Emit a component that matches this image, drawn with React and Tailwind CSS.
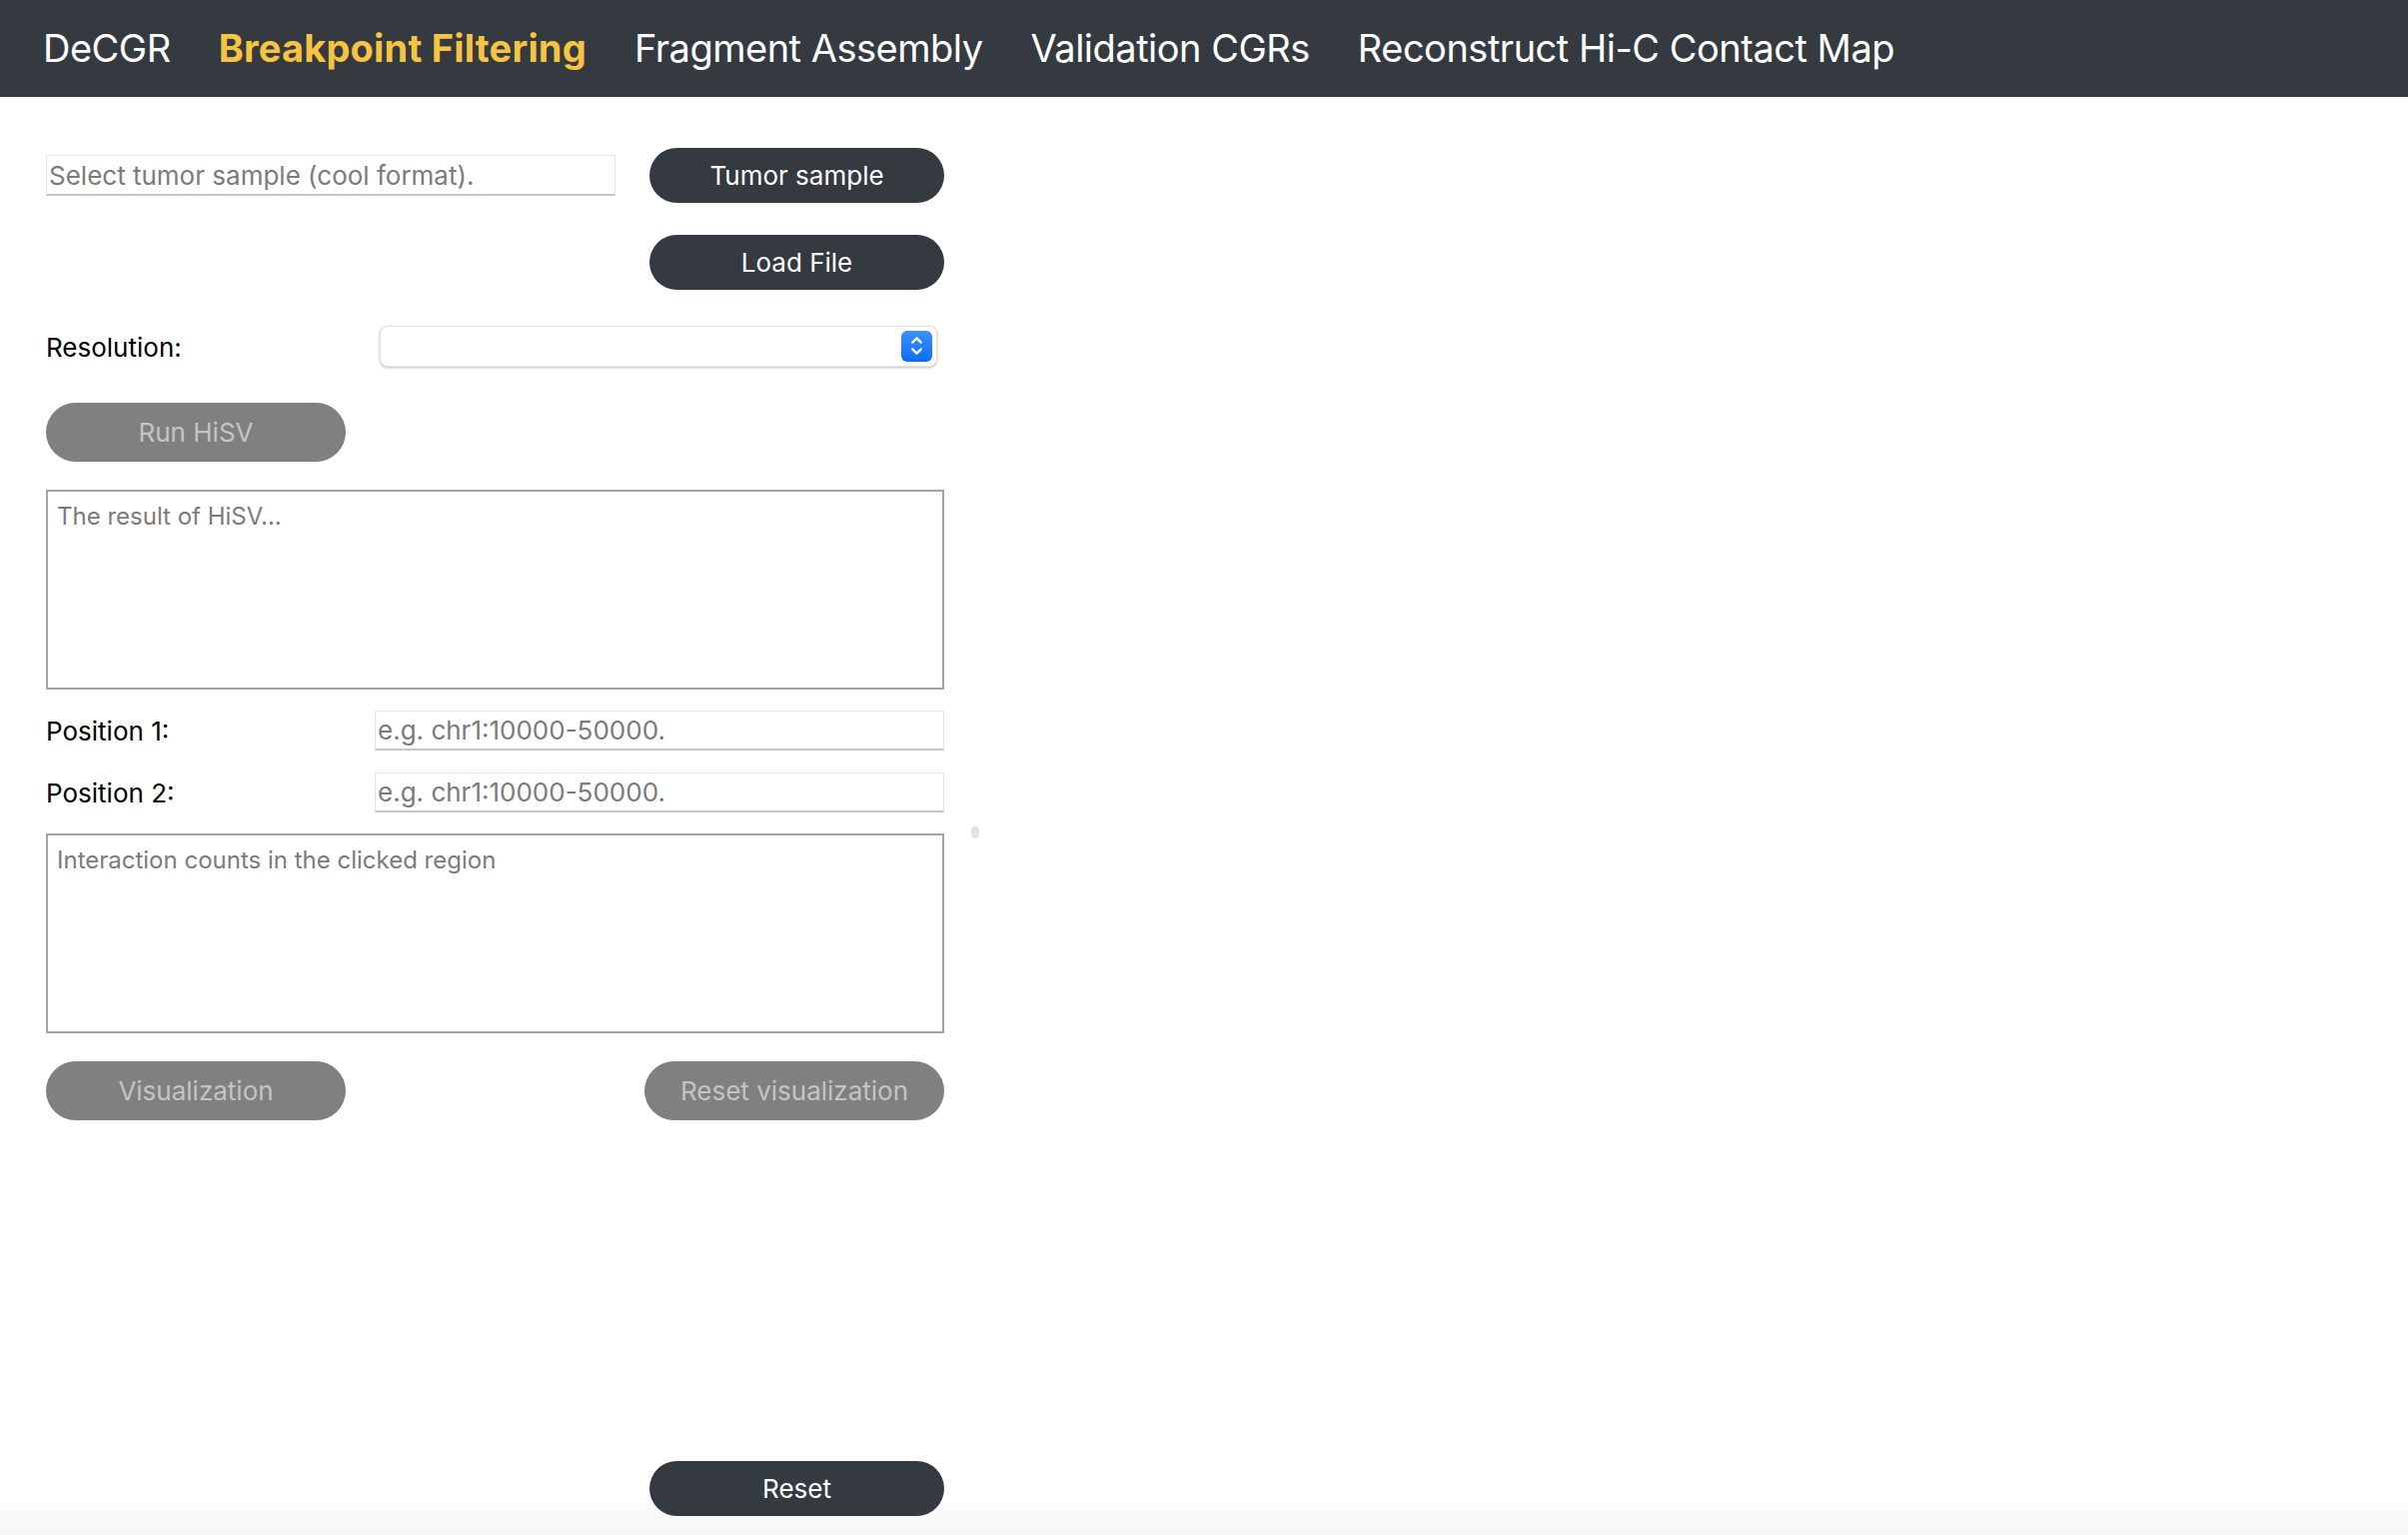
import { ChevronUp, ChevronDown } from 'lucide-react'

const navItems = [
  { label: 'DeCGR', active: false },
  { label: 'Breakpoint Filtering', active: true },
  { label: 'Fragment Assembly', active: false },
  { label: 'Validation CGRs', active: false },
  { label: 'Reconstruct Hi-C Contact Map', active: false },
]

function DarkButton({ children }) {
  return (
    <button className="w-[295px] h-[55px] rounded-full bg-[#343a40] text-white text-[26px] leading-none">
      {children}
    </button>
  )
}

function GrayButton({ children }) {
  return (
    <button
      disabled
      className="w-[300px] h-[59px] rounded-full bg-[#808080] text-[#c4c4c4] text-[26px] leading-none"
    >
      {children}
    </button>
  )
}

function TextInput({ placeholder, className }) {
  return (
    <input
      placeholder={placeholder}
      className={
        'h-[40px] px-[2px] bg-white border border-[#e4e4e4] border-b-2 border-b-[#c6c6c6] text-[26px] text-[#222] placeholder:text-[#7b7b7b] outline-none ' +
        className
      }
    />
  )
}

export default function App() {
  return (
    <div className="min-h-screen bg-white flex flex-col" style={{ fontFamily: 'Inter, "Noto Sans", sans-serif' }}>
      <nav className="h-[97px] bg-[#343a40] flex items-center pl-[43px] gap-[48px] shrink-0">
        {navItems.map((item) => (
          <span
            key={item.label}
            className={
              item.active
                ? 'text-[38px] font-bold text-[#f6c343] tracking-[0.2px]'
                : 'text-[38px] text-white tracking-[-0.5px]'
            }
          >
            {item.label}
          </span>
        ))}
      </nav>

      <main className="flex-1 flex flex-col pl-[46px] pt-[51px] text-[26px] text-black">
        <div className="w-[899px] flex items-center justify-between">
          <TextInput placeholder="Select tumor sample (cool format)." className="w-[570px] h-[41px]" />
          <DarkButton>Tumor sample</DarkButton>
        </div>

        <div className="w-[899px] flex justify-end mt-[32px]">
          <DarkButton>Load File</DarkButton>
        </div>

        <div className="w-[899px] flex items-center mt-[35px]">
          <span className="w-[334px] pt-[3px]">Resolution:</span>
          <div className="w-[558px] h-[41px] rounded-[8px] border border-[#e2e2e2] shadow-[0_1px_3px_rgba(0,0,0,0.25)] bg-white flex items-center justify-end pr-[4px]">
            <div className="w-[31px] h-[31px] rounded-[6px] bg-gradient-to-b from-[#3b91ff] to-[#0a6cf5] flex flex-col items-center justify-center text-white">
              <ChevronUp size={17} strokeWidth={3.2} className="-mb-[3px]" />
              <ChevronDown size={17} strokeWidth={3.2} className="-mt-[3px]" />
            </div>
          </div>
        </div>

        <div className="mt-[36px]">
          <GrayButton>Run HiSV</GrayButton>
        </div>

        <textarea
          placeholder="The result of HiSV..."
          className="mt-[28px] w-[899px] h-[200px] border-2 border-[#a3a3a3] px-[9px] py-[7px] text-[24px] placeholder:text-[#7b7b7b] resize-none outline-none"
        />

        <div className="w-[899px] flex items-center justify-between mt-[21px]">
          <span>Position 1:</span>
          <TextInput placeholder="e.g. chr1:10000-50000." className="w-[570px]" />
        </div>

        <div className="w-[899px] flex items-center justify-between mt-[22px]">
          <span>Position 2:</span>
          <TextInput placeholder="e.g. chr1:10000-50000." className="w-[570px]" />
        </div>

        <div className="flex mt-[21px]">
          <textarea
            placeholder="Interaction counts in the clicked region"
            className="w-[899px] h-[200px] border-2 border-[#a3a3a3] px-[9px] py-[7px] text-[24px] placeholder:text-[#7b7b7b] resize-none outline-none"
          />
          <div className="ml-[27px] -mt-[7px] w-[8px] h-[12px] rounded-full bg-[#e3e3e3]" />
        </div>

        <div className="w-[899px] flex justify-between mt-[28px]">
          <GrayButton>Visualization</GrayButton>
          <GrayButton>Reset visualization</GrayButton>
        </div>

        <div className="flex-1" />
      </main>

      <footer className="pl-[46px] pb-[19px] bg-[linear-gradient(to_bottom,#ffffff_42px,#fbfbfb_43px,#f6f6f6)]">
        <div className="w-[899px] flex justify-end">
          <DarkButton>Reset</DarkButton>
        </div>
      </footer>
    </div>
  )
}
